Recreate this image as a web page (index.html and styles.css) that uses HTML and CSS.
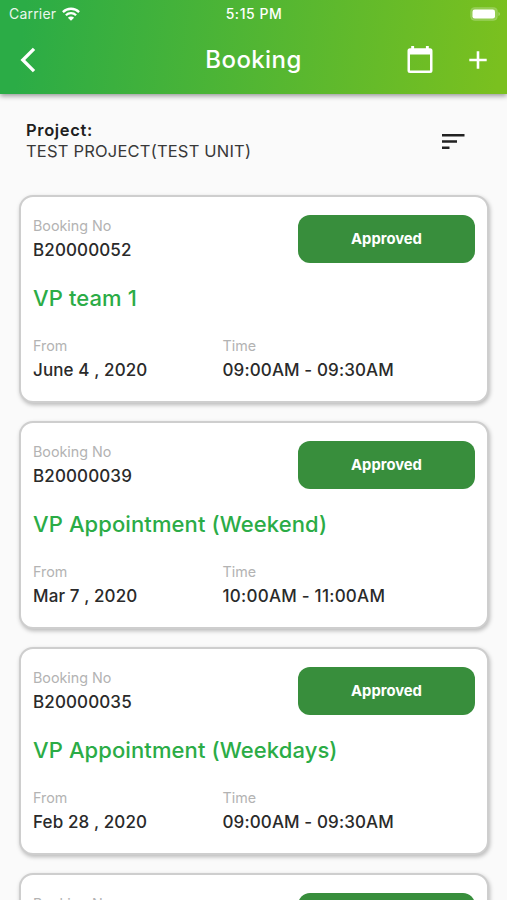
FILE: index.html
```html
<!DOCTYPE html>
<html lang="en">
<head>
<meta charset="utf-8">
<title>Booking</title>
<link rel="stylesheet" href="styles.css">
</head>
<body>
<header class="header">
  <div class="status">
    <div class="status-left"><span class="carrier">Carrier</span>
      <svg class="wifi" width="18" height="14" viewBox="0 0 18 14" fill="none" stroke="#fff" stroke-width="2.3"><path d="M.9 5.1a11.5 11.5 0 0 1 16.2 0M3.9 8.2a7.2 7.2 0 0 1 10.2 0"/><path d="M9 13.8 5.9 10.7a4.4 4.4 0 0 1 6.2 0z" fill="#fff" stroke="none"/></svg>
    </div>
    <span class="clock">5:15 PM</span>
    <div class="status-right"><svg width="30" height="14" viewBox="0 0 30 14"><rect x=".6" y=".6" width="26.8" height="12.8" rx="4" fill="#fff" fill-opacity=".22" stroke="#fff" stroke-opacity=".12"/><rect x="2.5" y="2.5" width="22.5" height="9" rx="2.3" fill="#fff"/><path d="M28.5 5v4q1.3-.6 1.3-2t-1.3-2z" fill="#fff" fill-opacity=".4"/></svg></div>
  </div>
  <nav class="nav">
    <svg class="back" width="16" height="26" viewBox="0 0 16 26" fill="none" stroke="#fff" stroke-width="3.3"><path d="M14 1.8 2.8 13 14 24.200"/></svg>
    <h1 class="nav-title">Booking</h1>
    <div class="actions">
      <svg width="26" height="28" viewBox="0 0 26 28"><path fill="#fff" fill-rule="evenodd" d="M4.200 0h2.900v2.200h11.800V0h2.900v2.200H23a2.500 2.500 0 0 1 2.500 2.500v19.800A2.500 2.500 0 0 1 23 27H3a2.500 2.500 0 0 1-2.500-2.500V4.700A2.500 2.500 0 0 1 3 2.200h1.200zM3 8.500v16h20v-16z"/></svg>
      <svg width="18" height="18" viewBox="0 0 18 18" fill="none" stroke="#fff" stroke-width="2.600"><path d="M9 .3v17.400M.3 9h17.400"/></svg>
    </div>
  </nav>
</header>
<main>
  <section class="project">
    <div><div class="project-label">Project:</div><div class="project-name">TEST PROJECT(TEST UNIT)</div></div>
    <svg width="23" height="16" viewBox="0 0 23 16" fill="#212121"><path d="M0 0h22.500v2.500H0zM0 6.200h15v2.500H0zM0 12.400h7.500v2.500H0z"/></svg>
  </section>
  <article class="card">
    <div class="top"><div><div class="label">Booking No</div><div class="value">B20000052</div></div><div class="badge">Approved</div></div>
    <h2 class="title">VP team 1</h2>
    <div class="times"><div><div class="label">From</div><div class="value">June 4 , 2020</div></div><div><div class="label">Time</div><div class="value">09:00AM - 09:30AM</div></div></div>
  </article>
  <article class="card">
    <div class="top"><div><div class="label">Booking No</div><div class="value">B20000039</div></div><div class="badge">Approved</div></div>
    <h2 class="title">VP Appointment (Weekend)</h2>
    <div class="times"><div><div class="label">From</div><div class="value">Mar 7 , 2020</div></div><div><div class="label">Time</div><div class="value wide">10:00AM - 11:00AM</div></div></div>
  </article>
  <article class="card">
    <div class="top"><div><div class="label">Booking No</div><div class="value">B20000035</div></div><div class="badge">Approved</div></div>
    <h2 class="title">VP Appointment (Weekdays)</h2>
    <div class="times"><div><div class="label">From</div><div class="value">Feb 28 , 2020</div></div><div><div class="label">Time</div><div class="value">09:00AM - 09:30AM</div></div></div>
  </article>
  <article class="card">
    <div class="top"><div><div class="label">Booking No</div></div><div class="badge"></div></div>
  </article>
</main>
</body>
</html>
```
FILE: styles.css
```css
* { box-sizing: border-box; }
body {
  margin: 0;
  height: 900px;
  overflow: hidden;
  display: flex;
  flex-direction: column;
  background: #fafafa;
  color: #2a2a2a;
  font-family: Inter, "Liberation Sans", sans-serif;
}
svg { display: block; flex: none; }
main { flex: 1; min-height: 0; overflow: hidden; }
.header {
  flex: none;
  position: relative;
  height: 94px;
  background: linear-gradient(97deg, #2bac46 5%, #7ac01f 98%);
  box-shadow: 0 2px 5px rgba(0, 0, 0, .4);
  color: #fff;
}
.status {
  height: 26px;
  padding: 0 7px 0 9px;
  display: grid;
  grid-template-columns: 1fr auto 1fr;
  align-items: center;
}
.status-left { display: flex; align-items: center; gap: 6px; }
.status-right { display: flex; justify-content: flex-end; }
.carrier { font-size: 14px; letter-spacing: .2px; line-height: 26px; padding-top: 1px; opacity: .9; }
.clock { font-size: 14px; font-weight: 500; letter-spacing: .55px; margin-left: -1px; }
.nav {
  height: 68px;
  padding: 0 20px;
  display: grid;
  grid-template-columns: 1fr auto 1fr;
  align-items: center;
}
.nav-title { margin: -1px 0 0; font-size: 24px; font-weight: 500; letter-spacing: .4px; }
.actions { display: flex; justify-content: flex-end; align-items: center; gap: 36px; padding-right: .5px; }
.project {
  height: 101px;
  padding: 26px 42px 0 26px;
  display: flex;
  justify-content: space-between;
}
.project svg { margin-top: 14px; }
.project-label, .project-name { font-size: 16.500px; line-height: 21px; white-space: nowrap; }
.project-label { font-weight: 600; letter-spacing: .65px; color: #202020; }
.project-name { letter-spacing: .2px; color: #383838; }
.card {
  height: 208px;
  margin: 0 18px 18px 19px;
  padding: 17.500px 12px 0;
  border: 2px solid #cecece;
  border-radius: 14px;
  background: #fff;
  box-shadow: 1px 2px 4px rgba(0, 0, 0, .26);
}
.top { display: flex; justify-content: space-between; }
.label { font-size: 14.300px; line-height: 22px; color: #b3b3b3; }
.value { font-size: 17px; line-height: 26px; font-weight: 500; letter-spacing: .12px; white-space: nowrap; }
.wide { letter-spacing: .25px; }
.badge {
  width: 177px;
  height: 48.500px;
  border-radius: 12px;
  background: #388e3c;
  color: #fff;
  font-size: 14.800px;
  line-height: 49px;
  font-weight: 700;
  text-align: center;
}
.title {
  margin: 19px 0 20.500px;
  font-size: 22px;
  line-height: 32px;
  font-weight: 500;
  letter-spacing: .1px;
  color: #2bac46;
  white-space: nowrap;
}
.times { display: grid; grid-template-columns: 189.500px 1fr; }
```
